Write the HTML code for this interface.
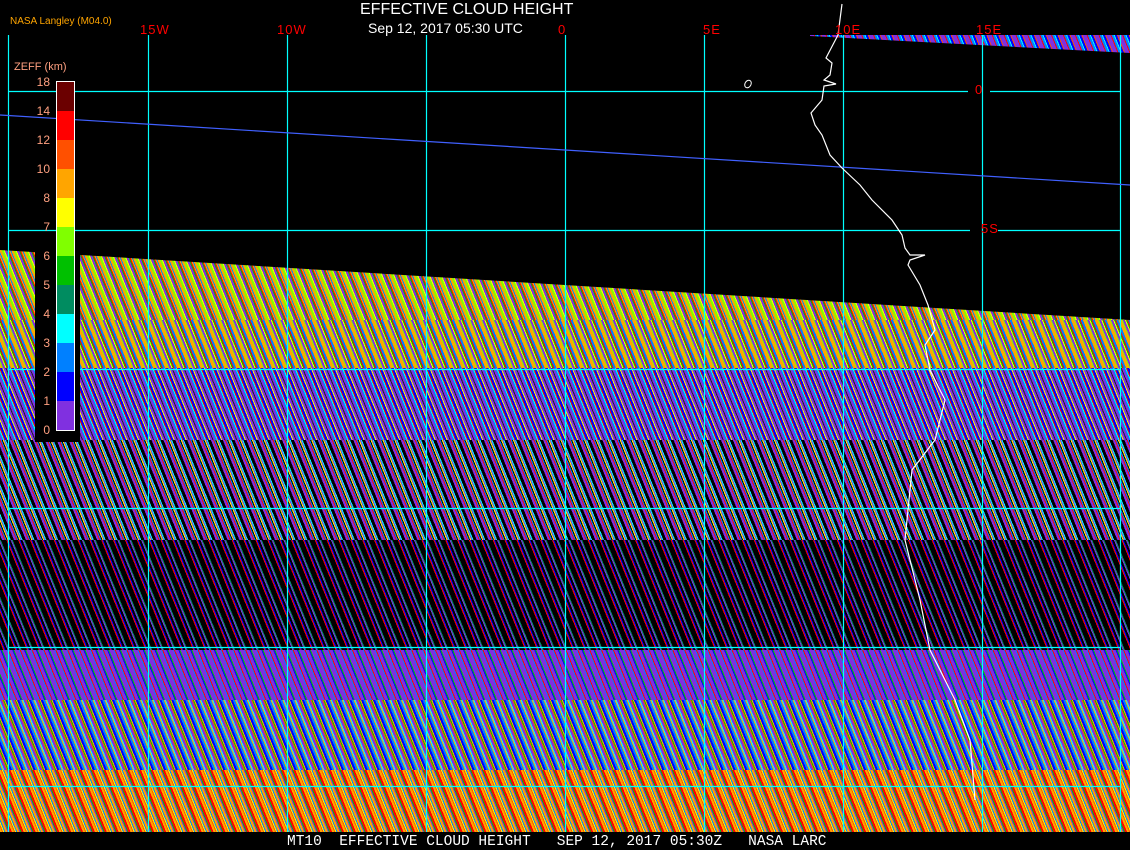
<!DOCTYPE html>
<html><head><meta charset="utf-8"><style>
html,body{margin:0;padding:0;background:#000;}
#w{position:relative;width:1130px;height:850px;overflow:hidden;background:#000;font-family:"Liberation Sans",sans-serif;}
.b{position:absolute;left:0;width:1130px;}
.t{position:absolute;white-space:nowrap;}
.red{color:#f00;font-family:"Liberation Sans",sans-serif;font-size:13px;letter-spacing:1px;}
.lab{position:absolute;right:1080px;color:#ffa080;font-size:12px;font-family:"Liberation Sans",sans-serif;text-align:right;}
</style></head><body><div id="w">

<div class="b" style="top:33px;height:22px;clip-path:polygon(810px 2px,1130px 2px,1130px 20px,810px 3px);background:repeating-linear-gradient(68deg,#8030e0 0 3px,#ff0000 3px 4px,#0080ff 4px 6px,#00ffff 6px 7px,#0000ff 7px 9px,#ff5000 9px 10px,#8030e0 10px 11px);"></div>

<div class="b" style="top:250px;height:90px;clip-path:polygon(0 0,1130px 70px,1130px 120px,0 120px);background:repeating-linear-gradient(68deg,#ffa500 0 2px,#80ff00 2px 4px,#ffff00 4px 5px,#8030e0 5px 7px,#00c000 7px 8px,#ff0000 8px 9px,#ffa500 9px 10px,#0080ff 10px 11px);"></div>
<div class="b" style="top:320px;height:48px;background:repeating-linear-gradient(68deg,#ffa500 0 2px,#80ff00 2px 3px,#8030e0 3px 5px,#ffff00 5px 6px,#00c000 6px 7px,#ff0000 7px 8px,#0080ff 8px 10px,#ffa500 10px 11px);"></div>
<div class="b" style="top:368px;height:72px;background:repeating-linear-gradient(68deg,#8030e0 0 2px,#0080ff 2px 3px,#00ffff 3px 4px,#ff0000 4px 5px,#0000ff 5px 7px,#ffff00 7px 8px,#8030e0 8px 10px,#222 10px 11px);"></div>
<div class="b" style="top:440px;height:100px;background:repeating-linear-gradient(68deg,#000 0 2px,#8030e0 2px 4px,#ff0000 4px 5px,#0080ff 5px 6px,#000 6px 7px,#ffff00 7px 8px,#8030e0 8px 9px,#00ffff 9px 10px,#000 10px 11px);"></div>
<div class="b" style="top:540px;height:110px;background:repeating-linear-gradient(68deg,#000 0 3px,#ff0000 3px 4px,#0000ff 4px 5px,#000 5px 7px,#8030e0 7px 8px,#008c60 8px 9px,#000 9px 11px);"></div>
<div class="b" style="top:650px;height:50px;background:repeating-linear-gradient(68deg,#8030e0 0 3px,#0080ff 3px 4px,#ff0000 4px 5px,#8030e0 5px 8px,#0000ff 8px 9px,#00c000 9px 10px,#8030e0 10px 11px);"></div>
<div class="b" style="top:700px;height:70px;background:repeating-linear-gradient(68deg,#0080ff 0 2px,#ffa500 2px 3px,#00ffff 3px 4px,#8030e0 4px 6px,#ff5000 6px 7px,#00c000 7px 8px,#ffa500 8px 9px,#0000ff 9px 11px);"></div>
<div class="b" style="top:770px;height:62px;background:repeating-linear-gradient(68deg,#ffa500 0 2px,#ff5000 2px 3px,#ffff00 3px 4px,#0080ff 4px 5px,#ffa500 5px 7px,#8030e0 7px 8px,#00c000 8px 9px,#ff0000 9px 11px);"></div>
<div class="b" style="top:832px;height:18px;background:#000;"></div>

<svg class="b" style="top:0;height:850px" width="1130" height="850">
<g stroke="#00ffff" stroke-width="1.2" fill="none">
<line x1="8.5" y1="35" x2="8.5" y2="832"/><line x1="148.5" y1="35" x2="148.5" y2="832"/>
<line x1="287.5" y1="35" x2="287.5" y2="832"/><line x1="426.5" y1="35" x2="426.5" y2="832"/>
<line x1="565.5" y1="35" x2="565.5" y2="832"/><line x1="704.5" y1="35" x2="704.5" y2="832"/>
<line x1="843.5" y1="35" x2="843.5" y2="832"/><line x1="982.5" y1="35" x2="982.5" y2="832"/>
<line x1="1120.5" y1="35" x2="1120.5" y2="832"/>
<line x1="8" y1="91.5" x2="968" y2="91.5"/><line x1="990" y1="91.5" x2="1120" y2="91.5"/>
<line x1="8" y1="230.5" x2="970" y2="230.5"/><line x1="998" y1="230.5" x2="1120" y2="230.5"/>
<line x1="8" y1="369.5" x2="1120" y2="369.5"/><line x1="8" y1="508.5" x2="1120" y2="508.5"/>
<line x1="8" y1="647.5" x2="1120" y2="647.5"/><line x1="8" y1="786.5" x2="1120" y2="786.5"/>
</g>
<line x1="0" y1="115" x2="1130" y2="185" stroke="#4060ff" stroke-width="1.2"/>
<polyline fill="none" stroke="#fff" stroke-width="1.2" points="842,4 838,35 826,58 832,63 830,75 824,80 836,84 824,86 822,100 811,113 815,125 822,135 830,155 842,168 860,185 872,200 892,220 902,235 905,248 910,255 925,255 910,260 908,265 920,285 928,305 935,330 925,345 930,370 945,400 935,440 912,470 905,540 920,600 930,650 955,700 970,740 975,800"/>
<ellipse cx="748" cy="84" rx="3" ry="4" fill="none" stroke="#fff" transform="rotate(30 748 84)"/>
</svg>

<div class="t" style="left:360px;top:1px;color:#fff;font-size:16px;">EFFECTIVE CLOUD HEIGHT</div>
<div class="t" style="left:368px;top:20px;color:#fff;font-size:14px;">Sep 12, 2017 05:30 UTC</div>
<div class="t" style="left:10px;top:16px;color:#ffa500;font-size:10px;">NASA Langley (M04.0)</div>
<div class="t red" style="left:140px;top:22px;">15W</div>
<div class="t red" style="left:277px;top:22px;">10W</div>
<div class="t red" style="left:558px;top:22px;">0</div>
<div class="t red" style="left:703px;top:22px;">5E</div>
<div class="t red" style="left:835px;top:22px;">10E</div>
<div class="t red" style="left:976px;top:22px;">15E</div>
<div class="t red" style="left:975px;top:82px;">0</div>
<div class="t red" style="left:981px;top:221px;">5S</div>

<div style="position:absolute;left:35px;top:250px;width:45px;height:192px;background:#000"></div>
<div class="t" style="left:14px;top:61px;color:#ffa080;font-size:11px;">ZEFF (km)</div>
<div style="position:absolute;left:56px;top:81px;width:17px;height:348px;border:1px solid #fff;background:linear-gradient(#6b0000 0 29px,#f00 29px 58px,#ff5000 58px 87px,#ffa500 87px 116px,#ff0 116px 145px,#80ff00 145px 174px,#00c000 174px 203px,#008c60 203px 232px,#0ff 232px 261px,#0080ff 261px 290px,#0000ff 290px 319px,#8030e0 319px 348px);"></div>
<div class="lab" style="top:75px">18</div>
<div class="lab" style="top:104px">14</div>
<div class="lab" style="top:133px">12</div>
<div class="lab" style="top:162px">10</div>
<div class="lab" style="top:191px">8</div>
<div class="lab" style="top:220px">7</div>
<div class="lab" style="top:249px">6</div>
<div class="lab" style="top:278px">5</div>
<div class="lab" style="top:307px">4</div>
<div class="lab" style="top:336px">3</div>
<div class="lab" style="top:365px">2</div>
<div class="lab" style="top:394px">1</div>
<div class="lab" style="top:423px">0</div>

<div class="t" style="left:287px;top:834px;color:#fff;font-family:'Liberation Mono',monospace;font-size:14.5px;white-space:pre;">MT10  EFFECTIVE CLOUD HEIGHT   SEP 12, 2017 05:30Z   NASA LARC</div>
</div></body></html>
